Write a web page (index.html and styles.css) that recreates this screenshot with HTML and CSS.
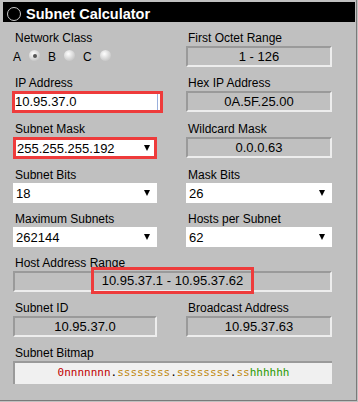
FILE: index.html
```html
<!DOCTYPE html>
<html lang="en">
<head>
    <meta charset="UTF-8">
    <title>Subnet Calculator</title>

    <link rel="stylesheet" href="styles.css">

</head>
<body>

<div class="panel">
    <div class="titlebar">
        <span class="title_icon"></span>
        <span class="title">Subnet Calculator</span>
    </div>

    <div class="grid">
        <div class="cell">
            <div class="label">Network Class</div>
            <div class="radios">
                <span class="radio_label">A</span><span class="radio checked"></span>
                <span class="radio_label">B</span><span class="radio"></span>
                <span class="radio_label">C</span><span class="radio"></span>
            </div>
        </div>
        <div class="cell">
            <div class="label">First Octet Range</div>
            <div class="readout">1 - 126</div>
        </div>

        <div class="cell">
            <div class="label">IP Address</div>
            <div class="input marked"><span class="input_text">10.95.37.0</span></div>
        </div>
        <div class="cell">
            <div class="label">Hex IP Address</div>
            <div class="readout">0A.5F.25.00</div>
        </div>

        <div class="cell">
            <div class="label">Subnet Mask</div>
            <div class="select marked"><span>255.255.255.192</span><span class="arrow"></span></div>
        </div>
        <div class="cell">
            <div class="label">Wildcard Mask</div>
            <div class="readout">0.0.0.63</div>
        </div>

        <div class="cell">
            <div class="label">Subnet Bits</div>
            <div class="select"><span>18</span><span class="arrow"></span></div>
        </div>
        <div class="cell">
            <div class="label">Mask Bits</div>
            <div class="select"><span>26</span><span class="arrow"></span></div>
        </div>

        <div class="cell">
            <div class="label">Maximum Subnets</div>
            <div class="select"><span>262144</span><span class="arrow"></span></div>
        </div>
        <div class="cell">
            <div class="label">Hosts per Subnet</div>
            <div class="select"><span>62</span><span class="arrow"></span></div>
        </div>

        <div class="cell wide">
            <div class="label">Host Address Range</div>
            <div class="readout range"><span class="highlight">10.95.37.1 - 10.95.37.62</span></div>
        </div>

        <div class="cell">
            <div class="label">Subnet ID</div>
            <div class="readout">10.95.37.0</div>
        </div>
        <div class="cell">
            <div class="label">Broadcast Address</div>
            <div class="readout">10.95.37.63</div>
        </div>

        <div class="cell wide">
            <div class="label">Subnet Bitmap</div>
            <div class="bitmap"><span class="bit_net">0nnnnnnn</span>.<span class="bit_sub">ssssssss</span>.<span class="bit_sub">ssssssss</span>.<span class="bit_sub">ss</span><span class="bit_host">hhhhhh</span></div>
        </div>
    </div>
</div>

</body>
</html>
```

FILE: styles.css
```css
* {
    margin: 0;
    padding: 0;
    box-sizing: border-box;
}

body {
    background-color: #c0c0c0;
    font-family: "Liberation Sans", Arial, sans-serif;
    color: #000000;
}

.panel {
    width: 357px;
    height: 401px;
    background-color: #c0c0c0;
    border-right: 1px solid #7a7a7a;
    border-bottom: 1px solid #7a7a7a;
    padding-top: 2px;
}

.titlebar {
    margin: 0 1px 0 3px;
    height: 20px;
    padding: 3px 0 0 4px;
    background-color: #000000;
    display: flex;
    align-items: center;
}

.title_icon {
    width: 14px;
    height: 14px;
    border: 1.5px solid #c8c8c8;
    border-radius: 50%;
    background-color: #000000;
    margin-right: 5px;
}

.title {
    color: #ffffff;
    font-weight: bold;
    font-size: 14.5px;
}

.grid {
    display: grid;
    grid-template-columns: 144px 146px;
    column-gap: 29px;
    row-gap: 9px;
    margin: 9px 0 0 13px;
}

.cell.wide {
    grid-column: 1 / 3;
}

.label {
    font-size: 12px;
    line-height: 14px;
    height: 14px;
    margin-bottom: 1px;
    padding-left: 2px;
}

.radios {
    height: 21px;
    display: flex;
    align-items: center;
    font-size: 12px;
}

.radio_label {
    margin-right: 8px;
}

.radio {
    width: 11px;
    height: 11px;
    border-radius: 50%;
    margin: 0 8px 2px 0;
    background: radial-gradient(circle at 40% 35%, #ffffff 0, #e4e4e4 35%, #b4b4b4 100%);
    display: flex;
    align-items: center;
    justify-content: center;
}

.radio.checked::after {
    content: "";
    width: 4px;
    height: 4px;
    border-radius: 50%;
    background-color: #555555;
}

.readout {
    height: 21px;
    border: 2px solid;
    border-color: #9a9a9a #ededed #ededed #9a9a9a;
    font-size: 13px;
    line-height: 17px;
    text-align: center;
}

.readout.range {
    display: flex;
    justify-content: center;
    align-items: center;
}

.highlight {
    display: inline-block;
    line-height: 17px;
    padding: 2px 8px;
    margin-bottom: 3px;
    outline: 3px solid #ee3b3b;
}

.input {
    height: 22px;
    width: 151px;
    margin-left: -1px;
    background-color: #ffffff;
    font-size: 13px;
    line-height: 16px;
    padding: 0 2px 0 0;
    display: flex;
}

.input.marked {
    border: 3px solid #ee3b3b;
}

.input_text {
    flex: 1;
    border-right: 1px solid #9ab0dc;
}

.select {
    height: 20px;
    background-color: #ffffff;
    font-size: 13px;
    display: flex;
    align-items: center;
    justify-content: space-between;
    padding: 0 7px 0 3px;
}

.select.marked {
    height: 22px;
    border: 3px solid #ee3b3b;
    padding: 0 4px 0 1px;
}

.arrow {
    width: 0;
    height: 0;
    border-left: 3px solid transparent;
    border-right: 3px solid transparent;
    border-top: 6px solid #000000;
}

.bitmap {
    height: 23px;
    background-color: #f0f0f0;
    border-top: 2px solid #9a9a9a;
    border-left: 2px solid #9a9a9a;
    font-family: "DejaVu Sans Mono", "Liberation Mono", monospace;
    font-size: 11px;
    line-height: 19px;
    text-align: center;
}

.bit_net {
    color: #c00000;
}

.bit_sub {
    color: #c08a10;
}

.bit_host {
    color: #2a9a00;
}
```
